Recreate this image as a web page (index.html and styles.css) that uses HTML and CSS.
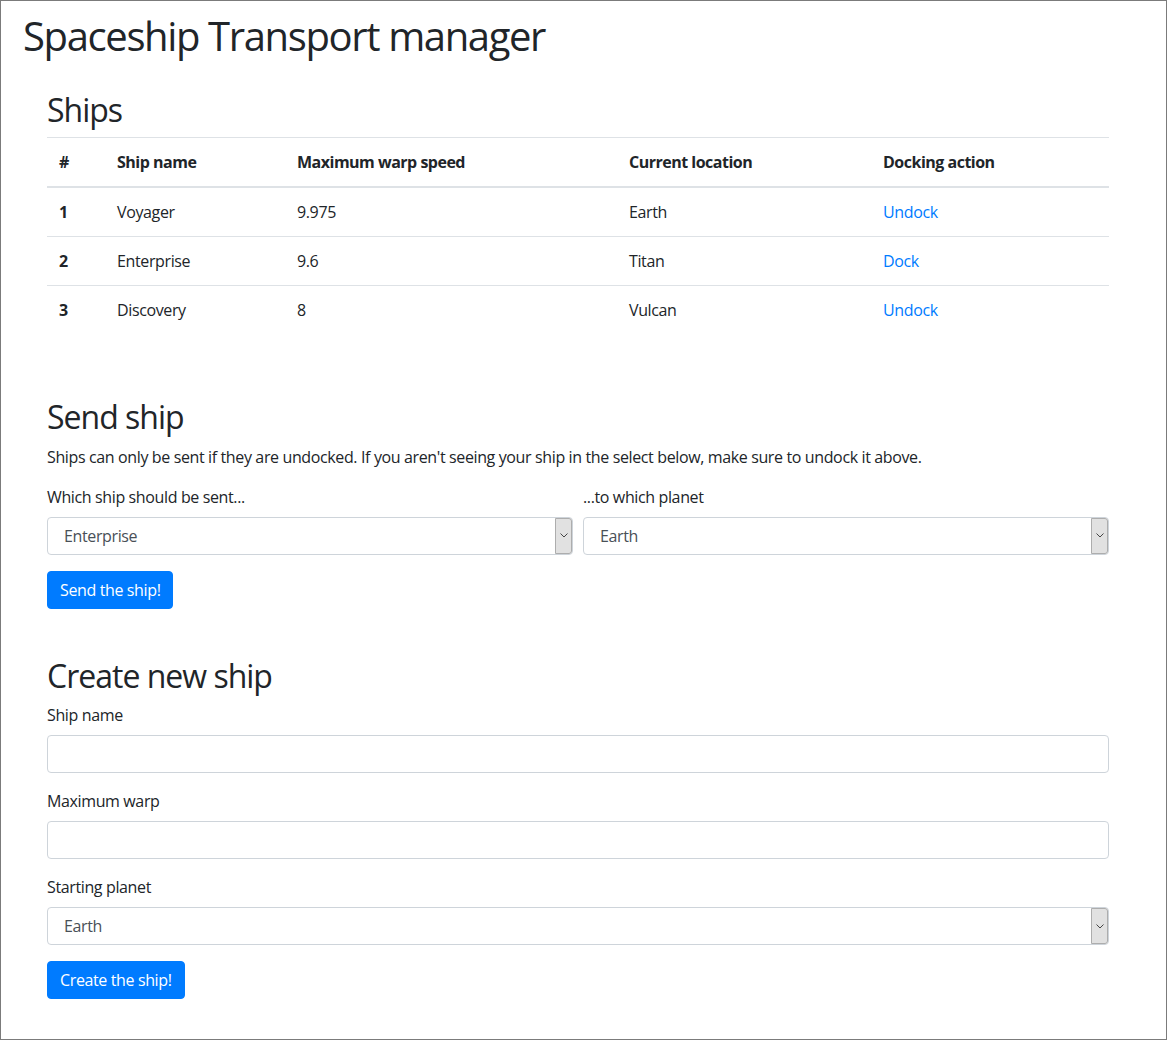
FILE: index.html
```html
<!DOCTYPE html>
<html lang="en">
<head>
<meta charset="utf-8">
<title>Spaceship Transport manager</title>
<link rel="stylesheet" href="styles.css">
</head>
<body>
<div class="page">
  <h1 class="title">Spaceship Transport manager</h1>
  <div class="container">
    <section class="section section-first">
      <h2 class="heading">Ships</h2>
      <table class="table">
        <colgroup>
          <col class="c1"><col class="c2"><col class="c3"><col class="c4"><col class="c5">
        </colgroup>
        <thead>
          <tr><th>#</th><th>Ship name</th><th>Maximum warp speed</th><th>Current location</th><th>Docking action</th></tr>
        </thead>
        <tbody>
          <tr><th>1</th><td>Voyager</td><td>9.975</td><td>Earth</td><td><a href="#" class="link">Undock</a></td></tr>
          <tr><th>2</th><td>Enterprise</td><td>9.6</td><td>Titan</td><td><a href="#" class="link">Dock</a></td></tr>
          <tr><th>3</th><td>Discovery</td><td>8</td><td>Vulcan</td><td><a href="#" class="link">Undock</a></td></tr>
        </tbody>
      </table>
    </section>

    <section class="section">
      <h2 class="heading">Send ship</h2>
      <p class="lead-text">Ships can only be sent if they are undocked. If you aren't seeing your ship in the select below, make sure to undock it above.</p>
      <form class="form">
        <div class="form-row">
          <div class="form-group col">
            <label class="label">Which ship should be sent...</label>
            <div class="select-wrap">
              <select class="control select"><option>Enterprise</option></select>
              <span class="arrow"><svg width="8" height="5" viewBox="0 0 8 5"><path d="M0.5 0.5 L4 4 L7.5 0.5" fill="none" stroke="#444" stroke-width="1"/></svg></span>
            </div>
          </div>
          <div class="form-group col">
            <label class="label">...to which planet</label>
            <div class="select-wrap">
              <select class="control select"><option>Earth</option></select>
              <span class="arrow"><svg width="8" height="5" viewBox="0 0 8 5"><path d="M0.5 0.5 L4 4 L7.5 0.5" fill="none" stroke="#444" stroke-width="1"/></svg></span>
            </div>
          </div>
        </div>
        <button type="button" class="btn">Send the ship!</button>
      </form>
    </section>

    <section class="section">
      <h2 class="heading">Create new ship</h2>
      <form class="form">
        <div class="form-group">
          <label class="label">Ship name</label>
          <input type="text" class="control">
        </div>
        <div class="form-group">
          <label class="label">Maximum warp</label>
          <input type="text" class="control">
        </div>
        <div class="form-group">
          <label class="label">Starting planet</label>
          <div class="select-wrap">
            <select class="control select"><option>Earth</option></select>
            <span class="arrow"><svg width="8" height="5" viewBox="0 0 8 5"><path d="M0.5 0.5 L4 4 L7.5 0.5" fill="none" stroke="#444" stroke-width="1"/></svg></span>
          </div>
        </div>
        <button type="button" class="btn">Create the ship!</button>
      </form>
    </section>
  </div>
</div>
</body>
</html>
```

FILE: styles.css
```css
* { box-sizing: border-box; }

html, body { height: 100%; }

body {
  margin: 0;
  border: 1px solid #7b7b7b;
  background: #fff;
  color: #212529;
  font-family: "Open Sans", "Noto Sans", sans-serif;
  font-size: 16px;
  line-height: 1.5;
  letter-spacing: -0.37px;
  overflow: hidden;
}

.page {
  padding: 11px 0 0 22px;
}

.title {
  margin: 0;
  font-size: 40px;
  font-weight: 400;
  line-height: 1.2;
  letter-spacing: -1.37px;
}

.container {
  width: 1062px;
  margin-left: 24px;
}

.section {
  display: flow-root;
  margin-top: 48px;
}
.section-first { margin-top: 31px; }

.heading {
  margin: 0 0 8px;
  font-size: 32px;
  font-weight: 400;
  line-height: 1.2;
  letter-spacing: -1px;
}

.table {
  width: 100%;
  border-collapse: collapse;
  table-layout: fixed;
  margin-bottom: 16px;
}
.c1 { width: 58px; }
.c2 { width: 180px; }
.c3 { width: 332px; }
.c4 { width: 254px; }
.c5 { width: 238px; }

.table th, .table td {
  padding: 12px;
  border-top: 1px solid #dee2e6;
  text-align: left;
  vertical-align: top;
}
.table th {
  font-weight: 700;
  letter-spacing: -0.5px;
}
.table thead th {
  border-bottom: 2px solid #dee2e6;
  vertical-align: bottom;
}

.link {
  color: #007bff;
  text-decoration: none;
}

.lead-text { margin: 0 0 16px; }

.form { margin: 0; }

.form-row {
  display: flex;
  gap: 10px;
}
.col { flex: 1 1 0; min-width: 0; }

.form-group { margin-bottom: 16px; }

.label {
  display: inline-block;
  margin-bottom: 8px;
}

.control {
  display: block;
  width: 100%;
  height: 38px;
  padding: 6px 12px;
  font-family: inherit;
  font-size: 16px;
  line-height: 1.5;
  letter-spacing: -0.37px;
  color: #495057;
  background: #fff;
  border: 1px solid #ced4da;
  border-radius: 4px;
  outline: none;
}

.select-wrap { position: relative; }

.select {
  appearance: none;
  -webkit-appearance: none;
  padding-left: 16px;
}

.arrow {
  position: absolute;
  top: 1px;
  bottom: 1px;
  right: 1px;
  width: 17px;
  display: flex;
  align-items: center;
  justify-content: center;
  background: #e1e1e1;
  border: 1px solid #adadad;
  border-radius: 0 3px 3px 0;
  pointer-events: none;
}

.btn {
  display: inline-block;
  height: 38px;
  padding: 6px 12px;
  font-family: inherit;
  font-size: 16px;
  line-height: 1.5;
  letter-spacing: -0.37px;
  color: #fff;
  background: #007bff;
  border: 1px solid #007bff;
  border-radius: 4px;
  cursor: pointer;
}
```
